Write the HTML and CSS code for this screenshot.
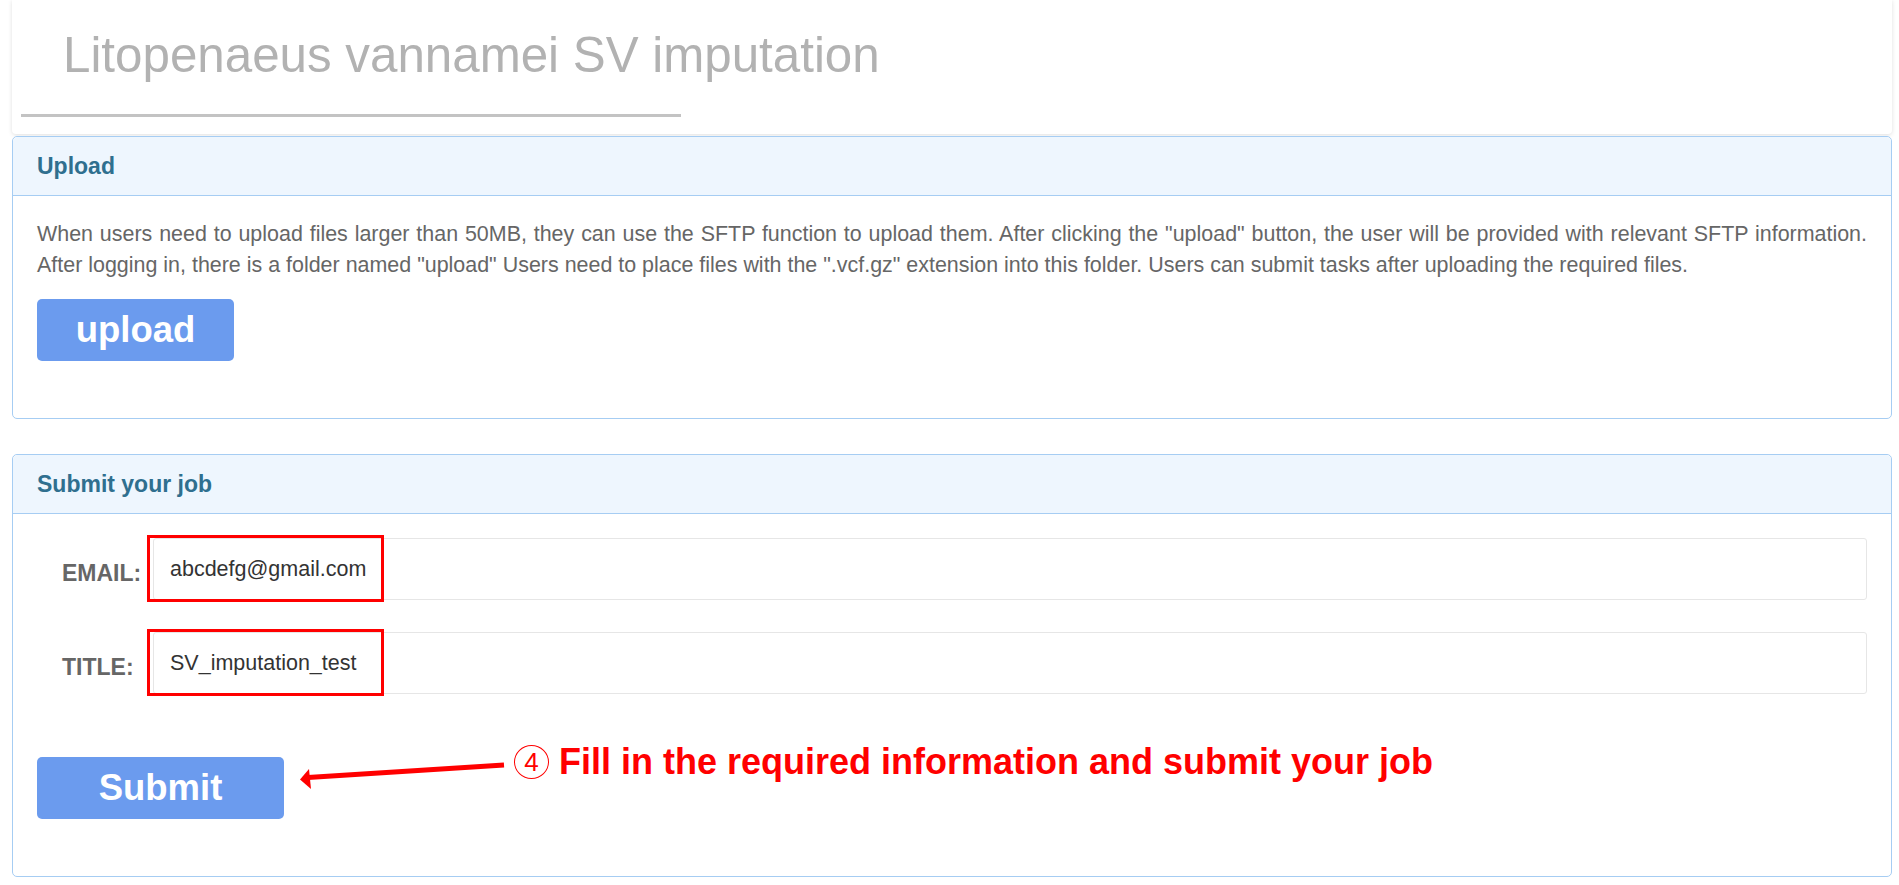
FILE: index.html
```html
<!DOCTYPE html>
<html lang="en">
<head>
<meta charset="utf-8">
<title>Litopenaeus vannamei SV imputation</title>
<link rel="stylesheet" href="styles.css">
</head>
<body>
<div class="page">
  <header class="top-card">
    <h1 class="site-title">Litopenaeus vannamei SV imputation</h1>
    <div class="title-bar"></div>
  </header>

  <section class="panel panel-upload">
    <div class="panel-heading"><h3 class="panel-title">Upload</h3></div>
    <div class="panel-body">
      <p class="info-text">When users need to upload files larger than 50MB, they can use the SFTP function to upload them. After clicking the "upload" button, the user will be provided with relevant SFTP information. After logging in, there is a folder named "upload" Users need to place files with the ".vcf.gz" extension into this folder. Users can submit tasks after uploading the required files.</p>
      <button class="btn btn-upload" type="button">upload</button>
    </div>
  </section>

  <section class="panel panel-submit">
    <div class="panel-heading"><h3 class="panel-title">Submit your job</h3></div>
    <div class="panel-body">
      <div class="form-row">
        <label class="form-label" for="email">EMAIL:</label>
        <div class="field">
          <input id="email" class="form-input" type="text" value="abcdefg@gmail.com">
          <span class="mark-box"></span>
        </div>
      </div>
      <div class="form-row">
        <label class="form-label" for="title">TITLE:</label>
        <div class="field">
          <input id="title" class="form-input" type="text" value="SV_imputation_test">
          <span class="mark-box"></span>
        </div>
      </div>
      <div class="submit-row">
        <button class="btn btn-submit" type="button">Submit</button>
        <svg class="note-arrow" width="212" height="40" viewBox="0 0 212 40" aria-hidden="true">
          <line x1="10" y1="22.5" x2="206" y2="10" stroke="#ff0000" stroke-width="5"/>
          <polygon points="2,24.5 11,14 13,34" fill="#ff0000"/>
        </svg>
        <div class="note">
          <span class="note-num">4</span>
          <span class="note-text">Fill in the required information and submit your job</span>
        </div>
      </div>
    </div>
  </section>
</div>
</body>
</html>
```

FILE: styles.css
```css
* {
  box-sizing: border-box;
}

html, body {
  margin: 0;
  padding: 0;
  background: #ffffff;
}

body {
  font-family: "Liberation Sans", Arial, Helvetica, sans-serif;
  color: #666666;
}

.page {
  padding: 0 7px 0 12px;
}

.top-card {
  height: 134px;
  background: #ffffff;
  border-radius: 0 0 4px 4px;
  box-shadow: 0 1px 4px rgba(0, 0, 0, 0.13);
  padding: 27px 0 0 9px;
}

.site-title {
  margin: 0 0 0 42px;
  font-size: 49.3px;
  line-height: 56px;
  font-weight: normal;
  color: #b2b2b2;
}

.title-bar {
  width: 660px;
  height: 3px;
  margin-top: 31px;
  background: #c3c3c3;
}

.panel {
  border: 1px solid #a6cdf3;
  border-radius: 5px;
  background: #ffffff;
}

.panel-upload {
  position: relative;
  margin-top: 2px;
}

.panel-submit {
  margin-top: 35px;
}

.panel-heading {
  height: 59px;
  display: flex;
  align-items: center;
  padding: 0 24px;
  background: #eef6fe;
  border-bottom: 1px solid #a6cdf3;
  border-radius: 5px 5px 0 0;
}

.panel-title {
  margin: 0;
  font-size: 23px;
  font-weight: bold;
  color: #2f6f8f;
}

.panel-body {
  padding: 23px 24px 57px 24px;
}

.info-text {
  margin: 0;
  font-size: 21.45px;
  line-height: 31px;
  text-align: justify;
  color: #666666;
}

.btn {
  display: block;
  border: none;
  border-radius: 5px;
  background: #6b9bee;
  color: #ffffff;
  font-family: "Liberation Sans", Arial, Helvetica, sans-serif;
  font-weight: bold;
  font-size: 36.5px;
  height: 62px;
  padding: 0;
  cursor: pointer;
}

.btn-upload {
  width: 197px;
  margin-top: 18px;
}

.panel-submit .panel-body {
  padding-top: 24px;
}

.form-row {
  display: flex;
  align-items: center;
  margin-bottom: 32px;
}

.form-label {
  width: 116px;
  padding-left: 25px;
  padding-top: 8px;
  font-size: 23px;
  font-weight: bold;
  color: #666666;
}

.field {
  position: relative;
  flex: 1;
}

.form-input {
  display: block;
  width: 100%;
  height: 62px;
  border: 1px solid #e6e6e6;
  border-radius: 3px;
  padding: 0 16px;
  font-family: "Liberation Sans", Arial, Helvetica, sans-serif;
  font-size: 21.5px;
  color: #333333;
  background: #ffffff;
  outline: none;
}

.mark-box {
  position: absolute;
  left: -6px;
  top: -3px;
  width: 237px;
  height: 67px;
  border: 3px solid #ff0000;
  pointer-events: none;
}

.submit-row {
  position: relative;
  margin-top: 63px;
  height: 62px;
}

.btn-submit {
  width: 247px;
}

.note-arrow {
  position: absolute;
  left: 261px;
  top: -2px;
}

.note {
  position: absolute;
  left: 477px;
  top: -12px;
  display: flex;
  align-items: center;
  white-space: nowrap;
}

.note-num {
  display: flex;
  align-items: center;
  justify-content: center;
  width: 35px;
  height: 34px;
  border: 1.5px solid #ff0000;
  border-radius: 50%;
  font-size: 26px;
  line-height: 1;
  color: #ff0000;
}

.note-text {
  margin-left: 10px;
  font-size: 36px;
  line-height: 34px;
  font-weight: bold;
  color: #ff0000;
}
```
